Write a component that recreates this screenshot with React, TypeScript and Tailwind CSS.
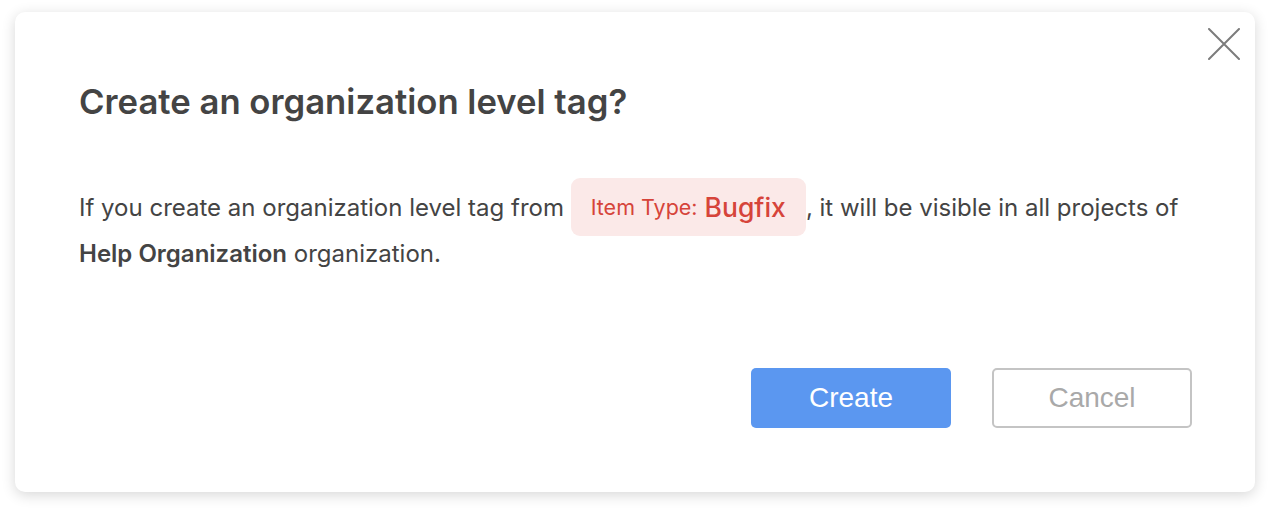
import React from "react";

function CloseIcon() {
  return (
    <svg width="32" height="32" viewBox="0 0 32 32" fill="none" aria-hidden>
      <path d="M1 1L31 31M31 1L1 31" stroke="#7c7c7c" strokeWidth="2" strokeLinecap="round" />
    </svg>
  );
}

export default function App() {
  return (
    <div className="h-[512px] w-[1272px] bg-white pl-[15px] pt-[12px]">
      <div className="relative flex h-[480px] w-[1240px] flex-col rounded-[10px] bg-white pl-[64px] pr-[63px] pt-[69px] shadow-[0_3px_14px_rgba(0,0,0,0.16)] font-['Inter',sans-serif]">
        <button className="absolute right-[15px] top-[16px]">
          <CloseIcon />
        </button>

        <h2 className="text-[34.7px] leading-[40px] font-semibold text-[#444444]">
          Create an organization level tag?
        </h2>

        <p className="mt-[63px] text-[24px] leading-[46px] text-[#444444]">
          If you create an organization level tag from{" "}
          <span className="my-[-6px] inline-flex h-[58px] items-center rounded-[9px] bg-[#fbe9e8] px-[20px] align-[1px] text-[#d6443a]">
            <span className="text-[21.5px]">Item Type:</span>
            <span className="ml-[7px] text-[26.5px] font-medium">Bugfix</span>
          </span>
          , it will be visible in all projects of
          <br />
          <span className="font-semibold">Help Organization</span> organization.
        </p>

        <div className="mt-auto mb-[64px] flex justify-end gap-[41px] font-['Liberation_Sans',Arial,sans-serif]">
          <button className="h-[60px] w-[200px] rounded-[5px] bg-[#5b97f0] text-[28px] text-white">
            Create
          </button>
          <button className="h-[60px] w-[200px] rounded-[5px] border-2 border-[#c4c4c4] bg-white text-[28px] text-[#a9a9a9]">
            Cancel
          </button>
        </div>
      </div>
    </div>
  );
}
